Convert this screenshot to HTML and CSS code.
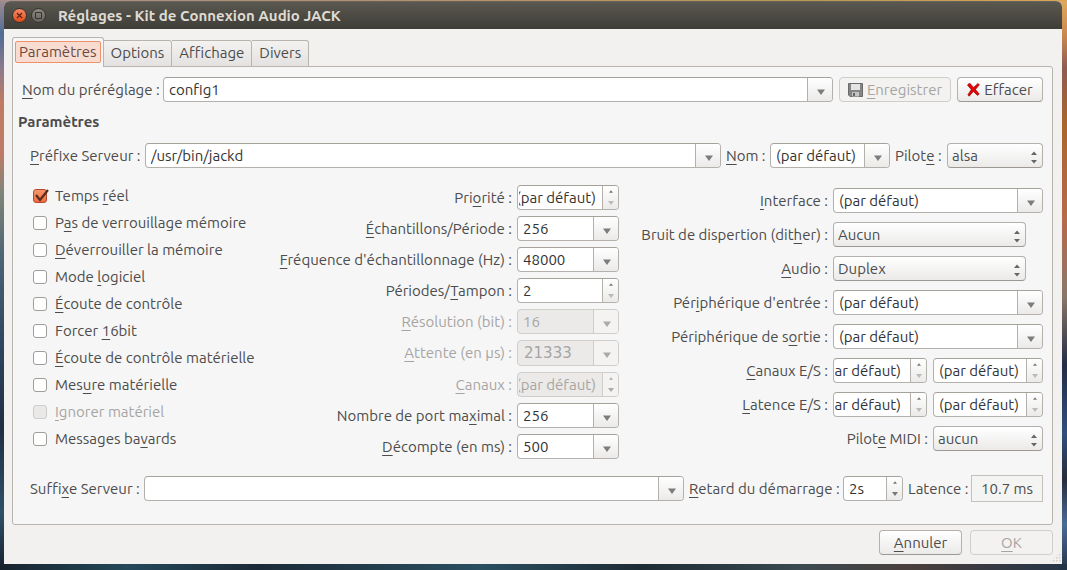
FILE: index.html
```html
<!DOCTYPE html>
<html lang="fr">
<head>
<meta charset="utf-8">
<title>Réglages - Kit de Connexion Audio JACK</title>
<link rel="stylesheet" href="styles.css">
</head>
<body>
<svg width="0" height="0" class="defs" aria-hidden="true">
  <symbol id="down" viewBox="0 0 8 6"><path d="M0 .5h8L4 6z" fill="currentColor"/></symbol>
  <symbol id="up-s" viewBox="0 0 6 4"><path d="M0 4h6L3 0z" fill="currentColor"/></symbol>
  <symbol id="down-s" viewBox="0 0 6 4"><path d="M0 0h6L3 4z" fill="currentColor"/></symbol>
  <symbol id="updown" viewBox="0 0 6 13"><path d="M0 4h6L3 .5zM0 9h6l-3 3.500z" fill="currentColor"/></symbol>
</svg>
<div class="window">
  <header class="titlebar">
    <button class="wbtn close" aria-label="Fermer"><svg width="7" height="7" viewBox="0 0 7 7"><path d="M1 1l5 5M6 1L1 6" stroke="#5a2412" stroke-width="1.200"/></svg></button>
    <button class="wbtn" aria-label="Agrandir"><svg width="7" height="7" viewBox="0 0 7 7"><path d="M.5.5h6v6h-6z" fill="none" stroke="#34332e"/></svg></button>
    <h1>Réglages - Kit de Connexion Audio JACK</h1>
  </header>
  <main class="content">
    <nav class="tabs">
      <button class="tab active"><span>Paramètres</span></button>
      <button class="tab">Options</button>
      <button class="tab">Affichage</button>
      <button class="tab">Divers</button>
    </nav>
    <section class="panel">
      <div class="preset">
        <label for="preset"><u>N</u>om du préréglage :</label>
        <div class="combo"><input id="preset" value="config1"><button aria-label="Ouvrir"><svg><use href="#down"/></svg></button></div>
        <button class="btn" disabled><svg class="icon" width="15" height="14" viewBox="0 0 15 14"><path d="M.5.5h14v13H2l-1.500-1.500z" fill="#858585" stroke="#6a6a6a"/><path d="M3 1h9v6H3z" fill="#e4e4e4"/><path d="M4 9h7v4.500H4z" fill="#c4c4c4"/><path d="M5 10h2v3H5z" fill="#666"/></svg><span><u>E</u>nregistrer</span></button>
        <button class="btn"><svg class="icon" width="13" height="14" viewBox="0 0 13 14"><path d="M2.600 0l4 4.400L11 .4l1.400 1.400-3.900 4.700 3.800 4.600-1.800 1.300L6.300 8.500 2.300 13.200.8 12l3.400-5.400L.4 2z" fill="#dc0606" stroke="#9a0000" stroke-width=".6"/></svg><span>Effacer</span></button>
      </div>
      <h2>Paramètres</h2>
      <div class="server">
        <label for="prefix"><u>P</u>réfixe Serveur :</label>
        <div class="combo"><input id="prefix" value="/usr/bin/jackd"><button aria-label="Ouvrir"><svg><use href="#down"/></svg></button></div>
        <label for="nom"><u>N</u>om :</label>
        <div class="combo"><input id="nom" value="(par défaut)"><button aria-label="Ouvrir"><svg><use href="#down"/></svg></button></div>
        <label for="pilote">Pilot<u>e</u> :</label>
        <div class="select"><select id="pilote"><option>alsa</option></select><svg><use href="#updown"/></svg></div>
      </div>
      <div class="columns">
        <div class="checks">
          <label><input type="checkbox" checked><svg class="tick" viewBox="0 0 16 14"><path d="M3 6l4 5 8-10" fill="none" stroke="#5c2b1b" stroke-width="2.200"/></svg><span>Temps <u>r</u>éel</span></label>
          <label><input type="checkbox"><span>P<u>a</u>s de verrouillage mémoire</span></label>
          <label><input type="checkbox"><span><u>D</u>éverrouiller la mémoire</span></label>
          <label><input type="checkbox"><span>Mode <u>l</u>ogiciel</span></label>
          <label><input type="checkbox"><span><u>É</u>coute de contrôle</span></label>
          <label><input type="checkbox"><span>Forcer <u>1</u>6bit</span></label>
          <label><input type="checkbox"><span><u>É</u>coute de contrôle matérielle</span></label>
          <label><input type="checkbox"><span>Mes<u>u</u>re matérielle</span></label>
          <label class="off"><input type="checkbox" disabled><span><u>I</u>gnorer matériel</span></label>
          <label><input type="checkbox"><span>Messages ba<u>v</u>ards</span></label>
        </div>
        <div class="middle">
          <label for="prio">Pri<u>o</u>rité :</label>
          <div class="spin min"><input id="prio" class="end" value="(par défaut)"><div><button aria-label="Plus"><svg><use href="#up-s"/></svg></button><button aria-label="Moins"><svg><use href="#down-s"/></svg></button></div></div>
          <label for="frames"><u>É</u>chantillons/Période :</label>
          <div class="combo"><input id="frames" value="256"><button aria-label="Ouvrir"><svg><use href="#down"/></svg></button></div>
          <label for="rate"><u>F</u>réquence d'échantillonnage (Hz) :</label>
          <div class="combo"><input id="rate" value="48000"><button aria-label="Ouvrir"><svg><use href="#down"/></svg></button></div>
          <label for="periods">Périodes/<u>T</u>ampon :</label>
          <div class="spin min"><input id="periods" value="2"><div><button aria-label="Plus"><svg><use href="#up-s"/></svg></button><button aria-label="Moins"><svg><use href="#down-s"/></svg></button></div></div>
          <label class="off" for="word"><u>R</u>ésolution (bit) :</label>
          <div class="combo disabled"><input id="word" value="16" disabled><button disabled aria-label="Ouvrir"><svg><use href="#down"/></svg></button></div>
          <label class="off" for="wait"><u>A</u>ttente (en µs) :</label>
          <div class="combo tall disabled"><input id="wait" class="wide" value="21333" disabled><button disabled aria-label="Ouvrir"><svg><use href="#down"/></svg></button></div>
          <label class="off" for="chan"><u>C</u>anaux :</label>
          <div class="spin disabled"><input id="chan" class="end" value="(par défaut)" disabled><div><button disabled aria-label="Plus"><svg><use href="#up-s"/></svg></button><button disabled aria-label="Moins"><svg><use href="#down-s"/></svg></button></div></div>
          <label for="ports">Nombre de port ma<u>x</u>imal :</label>
          <div class="combo"><input id="ports" value="256"><button aria-label="Ouvrir"><svg><use href="#down"/></svg></button></div>
          <label for="timeout"><u>D</u>écompte (en ms) :</label>
          <div class="combo"><input id="timeout" value="500"><button aria-label="Ouvrir"><svg><use href="#down"/></svg></button></div>
        </div>
        <div class="right">
          <label for="iface"><u>I</u>nterface :</label>
          <div class="combo"><input id="iface" value="(par défaut)"><button aria-label="Ouvrir"><svg><use href="#down"/></svg></button></div>
          <label for="dither">Bruit de dispertion (dit<u>h</u>er) :</label>
          <div class="select short"><select id="dither"><option>Aucun</option></select><svg><use href="#updown"/></svg></div>
          <label for="audio"><u>A</u>udio :</label>
          <div class="select short"><select id="audio"><option>Duplex</option></select><svg><use href="#updown"/></svg></div>
          <label for="indev">Pér<u>i</u>phérique d'entrée :</label>
          <div class="combo"><input id="indev" value="(par défaut)"><button aria-label="Ouvrir"><svg><use href="#down"/></svg></button></div>
          <label for="outdev">Périphérique de s<u>o</u>rtie :</label>
          <div class="combo"><input id="outdev" value="(par défaut)"><button aria-label="Ouvrir"><svg><use href="#down"/></svg></button></div>
          <label for="chin"><u>C</u>anaux E/S :</label>
          <div class="pair">
            <div class="spin min"><input id="chin" class="end narrow" value="(par défaut)"><div><button aria-label="Plus"><svg><use href="#up-s"/></svg></button><button aria-label="Moins"><svg><use href="#down-s"/></svg></button></div></div>
            <div class="spin min"><input aria-label="Canaux de sortie" value="(par défaut)"><div><button aria-label="Plus"><svg><use href="#up-s"/></svg></button><button aria-label="Moins"><svg><use href="#down-s"/></svg></button></div></div>
          </div>
          <label for="latin"><u>L</u>atence E/S :</label>
          <div class="pair">
            <div class="spin min"><input id="latin" class="end narrow" value="(par défaut)"><div><button aria-label="Plus"><svg><use href="#up-s"/></svg></button><button aria-label="Moins"><svg><use href="#down-s"/></svg></button></div></div>
            <div class="spin min"><input aria-label="Latence de sortie" value="(par défaut)"><div><button aria-label="Plus"><svg><use href="#up-s"/></svg></button><button aria-label="Moins"><svg><use href="#down-s"/></svg></button></div></div>
          </div>
          <div class="midi">
            <label for="midi">Pilot<u>e</u> MIDI :</label>
            <div class="select"><select id="midi"><option>aucun</option></select><svg><use href="#updown"/></svg></div>
          </div>
        </div>
      </div>
      <div class="suffix">
        <label for="suffix">Suffi<u>x</u>e Serveur :</label>
        <div class="combo"><input id="suffix" value=""><button aria-label="Ouvrir"><svg><use href="#down"/></svg></button></div>
        <label for="delay"><u>R</u>etard du démarrage :</label>
        <div class="spin"><input id="delay" value="2s"><div><button aria-label="Plus"><svg><use href="#up-s"/></svg></button><button aria-label="Moins"><svg><use href="#down-s"/></svg></button></div></div>
        <span>Latence :</span>
        <output class="latency">10.7 ms</output>
      </div>
    </section>
    <footer class="actions">
      <button class="btn"><span><u>A</u>nnuler</span></button>
      <button class="btn" disabled><span><u>O</u>K</span></button>
      <i class="grip"></i>
    </footer>
  </main>
</div>
<script src="script.js"></script>
</body>
</html>
```
FILE: styles.css
```css
* { box-sizing: border-box; }

body {
  margin: 0;
  min-height: 100vh;
  padding: 1px 5px 6px 4px;
  font: 15px/20px "Ubuntu", "Noto Sans", sans-serif;
  color: #4c4c4c;
  background:
    linear-gradient(90deg, #16232e, #24495a 12%, #1b2a38 24%, #2a4f60 45%, #1d2b35 60%, #3a4a50 75%, #4a3f3c 85%, #243448) bottom / 100% 6px no-repeat,
    linear-gradient(90deg, #a98f88, #b99067 50%, #b8994f 75%, #d9a45a) top / 100% 1px no-repeat,
    linear-gradient(#a08c90, #4f6c96 6%, #8a7a8c 12%, #c07a62 18%, #bd7b66 27%, #7f8478 34%, #4c6474 45%, #2f4660 60%, #1f2f42 75%, #2f5068 90%, #16202c) left / 50% 100% no-repeat,
    linear-gradient(#e0a85c, #c98a50 6%, #8d5c52 12%, #a8672c 22%, #b56a4c 38%, #8a7768 52%, #232c46 64%, #30507a 76%, #262c3c 84%, #4a6c94 92%, #26344a) right / 50% 100% no-repeat;
}

.defs { position: absolute; }
h1, h2 { margin: 0; }
button, input, select, output { font: inherit; color: inherit; margin: 0; }
u { text-decoration-thickness: 1px; text-underline-offset: 3px; text-decoration-skip-ink: none; }
label { white-space: nowrap; }

.window {
  min-height: calc(100vh - 7px);
  display: flex;
  flex-direction: column;
  border-radius: 6px 6px 0 0;
  overflow: hidden;
  background: #f2f1f0;
}

.titlebar {
  height: 28px;
  display: flex;
  align-items: center;
  gap: 4px;
  padding-left: 8px;
  background: linear-gradient(#5a5850, #3e3d38);
  border-top: 1px solid #65635a;
}
.titlebar h1 { margin-left: 8px; font-size: 15px; font-weight: 700; color: #dfdbd2; }
.wbtn {
  width: 15px;
  height: 15px;
  padding: 0;
  display: grid;
  place-items: center;
  border: 1px solid #34332e;
  border-radius: 50%;
  background: linear-gradient(#8a887f, #65635b);
}
.close { background: linear-gradient(#f58a66, #df4c1b); }

.content { flex: 1; display: flex; flex-direction: column; padding: 8px 9px 9px 8px; }

.tabs { display: flex; align-items: flex-end; height: 30px; margin-bottom: -1px; z-index: 1; }
.tab {
  height: 27px;
  padding: 0 7px 2px;
  border: 1px solid #b8b4ae;
  border-left: 0;
  border-radius: 0 3px 0 0;
  background: linear-gradient(#f3f2f1, #e4e2e0);
}
.tab.active {
  height: 30px;
  padding: 0 2px 2px;
  border-left: 1px solid #b8b4ae;
  border-bottom: 0;
  border-radius: 3px 3px 0 0;
  background: #f6f6f6;
}
.tab.active span {
  display: block;
  padding: 0 3px;
  border: 1px solid #f09068;
  border-radius: 2px;
  background: #f8dcd2;
  color: #6a4a40;
}

.panel {
  flex: 1;
  padding: 10px 9px 21px;
  border: 1px solid #b8b4ae;
  border-radius: 0 3px 3px 3px;
  background: #f6f6f6;
}

.preset { display: grid; grid-template-columns: 135px 1fr 112px 86px; column-gap: 6px; align-items: center; }
.panel h2 { margin: 10px 0 11px -4px; font-size: 15px; line-height: 20px; font-weight: 700; }
.server { display: grid; grid-template-columns: 110px 1fr 39px 120px 47px 96px; column-gap: 5px; align-items: center; padding-left: 8px; }

.btn {
  height: 25px;
  display: flex;
  align-items: center;
  justify-content: center;
  gap: 4px;
  padding: 0;
  border: 1px solid #b4b1ac;
  border-bottom-color: #9c9994;
  border-radius: 4px;
  background: linear-gradient(#fff, #ebeae9);
}
.btn:disabled { color: #a6a5a3; border-color: #d0cecb; background: #f3f2f1; }
.icon { flex: none; }

.combo, .spin {
  display: grid;
  grid-template-columns: minmax(0, 1fr) 25px;
  height: 25px;
  border: 1px solid #b4b1ac;
  border-top-color: #a5a29c;
  border-radius: 4px;
  overflow: hidden;
  background: #fff;
}
.combo.tall { height: 26px; }
.spin { grid-template-columns: minmax(0, 1fr) 16px; }
.combo input, .spin input {
  width: 100%;
  height: 23px;
  padding: 0 5px;
  border: 0;
  outline: 0;
  background: none;
  color: #333;
}
.spin .end { padding: 0 6px 0 1px; }
.spin .narrow { padding-right: 9px; }
.combo > button, .spin > div { border: 0; border-left: 1px solid #b4b1ac; background: linear-gradient(#fff, #ebeae9); }
.combo > button { padding: 4px 0 0 2px; display: grid; place-items: center; color: #7c7c7c; }
.combo svg { width: 8px; height: 6px; }
.spin > div { display: grid; grid-template-rows: 1fr 1fr; }
.spin button { padding: 0; border: 0; background: none; display: grid; place-items: center; color: #777; }
.spin svg { width: 4px; height: 3px; }
.spin button + button svg { width: 6px; height: 4px; }
.spin.min button + button { color: #bbb; }
.disabled { border-color: #d0cecb; background: #ebeae9; }
.combo.disabled input, .spin.disabled input, .off { color: #a6a5a3; }
.disabled > button, .disabled > div { border-color: #d0cecb; background: #f4f3f2; }
.combo.disabled button, .spin.disabled button { color: #aaa; }
.combo .wide { padding-left: 6px; font-family: "DejaVu Sans", sans-serif; }

.select { display: grid; align-items: center; }
.select > * { grid-area: 1 / 1; }
.select select {
  appearance: none;
  width: 100%;
  height: 25px;
  padding: 0 20px 0 4px;
  border: 1px solid #b4b1ac;
  border-bottom-color: #9c9994;
  border-radius: 4px;
  background: linear-gradient(#fff, #ebeae9);
}
.select svg { justify-self: end; width: 6px; height: 13px; margin: 4px 6px 0 0; color: #666; pointer-events: none; }

.columns {
  display: grid;
  grid-template-columns: 230px 356px 1fr;
  margin-top: 17px;
  padding-left: 11px;
}
.checks { display: flex; flex-direction: column; gap: 7px; padding-top: 1px; }
.checks label { display: grid; grid-template-columns: 14px auto; column-gap: 8px; align-items: center; justify-content: start; }
.checks input {
  appearance: none;
  grid-area: 1 / 1;
  width: 14px;
  height: 14px;
  margin: 0;
  border: 1px solid #a09d98;
  border-radius: 3px;
  background: #fff;
}
.checks input:checked { border-color: #b5482a; background: linear-gradient(#f8966e, #ee6f42); }
.checks input:disabled { border-color: #ccc; background: #eae9e8; }
.checks span { grid-area: 1 / 2; }
.tick { grid-area: 1 / 1; width: 16px; height: 14px; pointer-events: none; }

.middle { display: grid; grid-template-columns: 1fr 102px; gap: 6px 5px; align-items: center; align-content: start; }
.middle label, .right label { text-align: right; }
.right { display: grid; grid-template-columns: 1fr 210px; gap: 9px 5px; align-items: center; align-content: start; padding-top: 3px; }
.short { margin-right: 17px; }
.pair { display: grid; grid-template-columns: 94px 1fr; gap: 6px; }
.midi { grid-column: 1 / 3; display: grid; grid-template-columns: 1fr 110px; gap: 5px; align-items: center; }

.suffix { display: grid; grid-template-columns: 109px 1fr 149px 60px 58px 72px; column-gap: 5px; align-items: center; margin-top: 16px; padding-left: 8px; }
.suffix span { white-space: nowrap; }
.latency { height: 27px; display: grid; place-items: center; border: 1px solid #c4c1bc; background: #f4f4f3; }

.actions { display: flex; justify-content: flex-end; gap: 8px; margin-top: 5px; }
.actions .btn { width: 83px; }
.grip {
  position: absolute;
  right: 6px;
  bottom: 7px;
  width: 12px;
  height: 12px;
  background: conic-gradient(#dad7d3 25%, transparent 0) 0 0 / 3px 3px;
  clip-path: polygon(100% 0, 100% 100%, 0 100%);
}
```
FILE: script.js
```js
// Narrow spin boxes show the end of their text.
document.querySelectorAll('.end').forEach((field) => {
  field.scrollLeft = field.scrollWidth;
});
```
